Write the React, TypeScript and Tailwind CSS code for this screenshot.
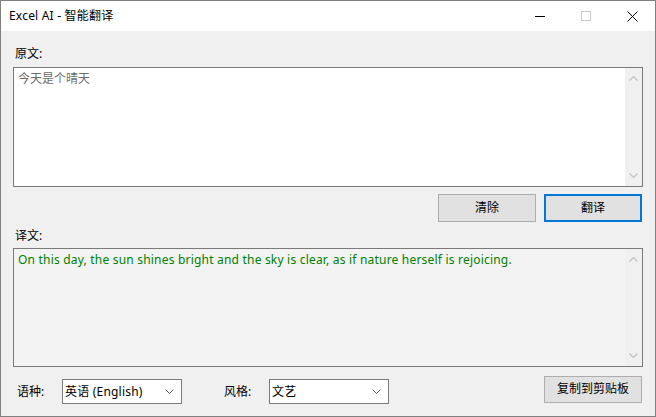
import React from "react";

const font = { fontFamily: '"Noto Sans", "Noto Sans CJK SC", sans-serif' };

function Chevron({ up }: { up?: boolean }) {
  return (
    <svg width="9" height="6" viewBox="0 0 9 6" className="block">
      <path d={up ? "M0.5 5.5 L4.5 1.5 L8.5 5.5" : "M0.5 0.5 L4.5 4.5 L8.5 0.5"} fill="none" stroke="#c2c2c2" strokeWidth="1.2" />
    </svg>
  );
}

function ScrollBar() {
  return (
    <div className="w-[17px] h-full bg-[#f0f0f0] flex flex-col justify-between items-center py-[7px]">
      <Chevron up />
      <Chevron />
    </div>
  );
}

function Combo({ text, width }: { text: string; width: string }) {
  return (
    <div className={`${width} h-[25px] border border-[#7a7a7a] bg-white flex items-center justify-between pl-[2px] pr-[7px]`}>
      <span className="text-[12px] text-black tracking-[0.2px]">{text}</span>
      <svg width="9" height="6" viewBox="0 0 9 6"><path d="M0.5 0.5 L4.5 4.5 L8.5 0.5" fill="none" stroke="#606060" strokeWidth="1" /></svg>
    </div>
  );
}

export default function App() {
  return (
    <div style={font} className="w-[656px] h-[417px] border border-[#808080] bg-[#f0f0f0] flex flex-col text-[12px] text-black">
      <div className="h-[30px] bg-white flex items-center shrink-0">
        <span className="pl-[8px] text-[12px] flex-1 tracking-[0.2px]">Excel AI - 智能翻译</span>
        <div className="flex h-full">
          <div className="w-[46px] h-full flex items-center justify-center">
            <div className="w-[10px] h-[1px] bg-black" />
          </div>
          <div className="w-[46px] h-full flex items-center justify-center">
            <div className="w-[10px] h-[10px] border border-[#c8c8c8]" />
          </div>
          <div className="w-[46px] h-full flex items-center justify-center">
            <svg width="11" height="11" viewBox="0 0 11 11"><path d="M0.5 0.5 L10.5 10.5 M10.5 0.5 L0.5 10.5" stroke="#000" strokeWidth="1" /></svg>
          </div>
        </div>
      </div>
      <div className="flex flex-col px-[12px]">
        <div className="pt-[15px] pl-[2px] h-[36px] leading-[16px]">原文:</div>
        <div className="h-[120px] border border-[#7a7a7a] bg-white flex">
          <div className="flex-1 pl-[4px] pt-[2px] text-[#6d6d6d] leading-[17px]">今天是个晴天</div>
          <ScrollBar />
        </div>
        <div className="flex justify-end gap-[8px] mt-[7px] pr-[1px]">
          <div className="w-[98px] h-[28px] border border-[#adadad] bg-[#e1e1e1] flex items-center justify-center">清除</div>
          <div className="w-[98px] h-[28px] border-2 border-[#0078d7] bg-[#e1e1e1] flex items-center justify-center">翻译</div>
        </div>
        <div className="pt-[6px] pl-[2px] h-[26px] leading-[16px]">译文:</div>
        <div className="h-[119px] border border-[#7a7a7a] bg-[#f3f3f3] flex">
          <div className="flex-1 pl-[4px] pt-[2px] text-[#008000] leading-[17px] tracking-[0.2px]">
            On this day, the sun shines bright and the sky is clear, as if nature herself is rejoicing.
          </div>
          <ScrollBar />
        </div>
        <div className="flex items-center mt-[12px]">
          <span className="pl-[4px] w-[49px]">语种:</span>
          <Combo text="英语 (English)" width="w-[120px]" />
          <span className="ml-[42px] w-[45px]">风格:</span>
          <Combo text="文艺" width="w-[120px]" />
          <div className="flex-1" />
          <div className="w-[98px] h-[27px] border border-[#adadad] bg-[#e1e1e1] flex items-center justify-center mr-[1px] mt-[-5px]">复制到剪贴板</div>
        </div>
      </div>
    </div>
  );
}
